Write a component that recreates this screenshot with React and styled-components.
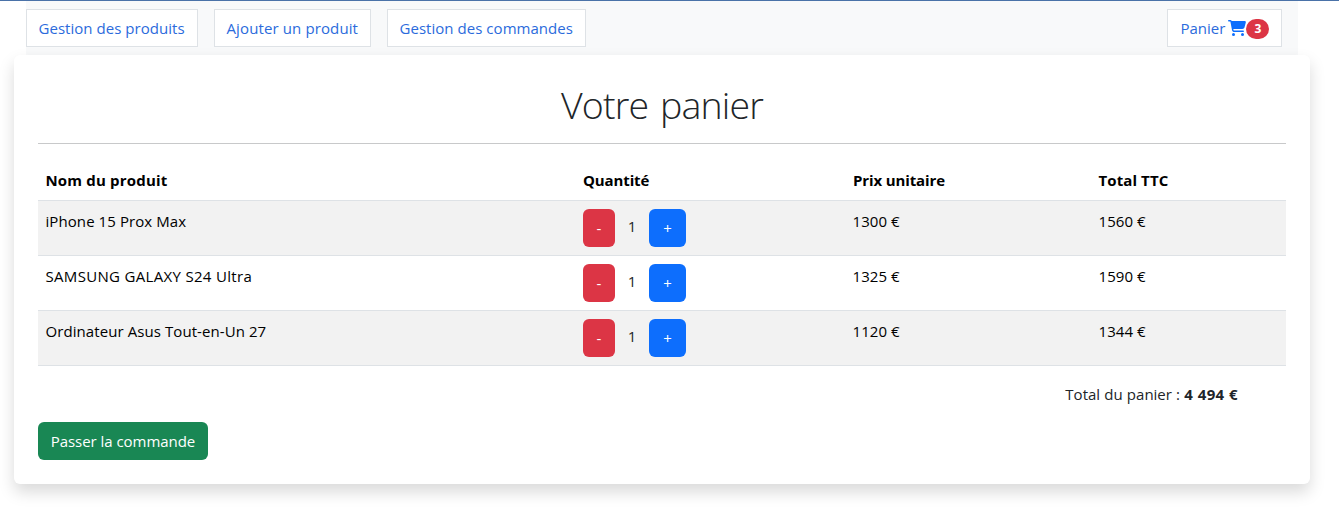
import React from "react";
import styled, { createGlobalStyle } from "styled-components";
import { FaCartShopping } from "react-icons/fa6";

const GlobalStyle = createGlobalStyle`
  *, *::before, *::after { box-sizing: border-box; }
  body {
    margin: 0;
    background: #fff;
    color: #212529;
    font-family: "Segoe UI", "Open Sans", "Noto Sans", sans-serif;
    font-size: 15px;
    line-height: 24px;
  }
`;

const Page = styled.div`
  height: 531px;
  overflow: hidden;
  border-top: 1px solid #4a72a8;
`;

const Navbar = styled.nav`
  display: flex;
  gap: 16px;
  height: 54px;
  margin: 0 41px 0 26px;
  padding: 8px 16px 8px 0;
  background: #f8f9fa;
`;

const NavLink = styled.a`
  display: flex;
  align-items: center;
  width: ${(p) => p.$width}px;
  height: 38px;
  padding: 0 0 0 ${(p) => (p.$end ? 12.5 : 11.5)}px;
  margin-left: ${(p) => (p.$end ? "auto" : 0)};
  border: 1px solid #dee2e6;
  background: #fff;
  color: #2b6bdc;
  letter-spacing: ${(p) => p.$track || 0}px;
  text-decoration: none;
  white-space: nowrap;
`;

const CartIcon = styled(FaCartShopping)`
  width: 18px;
  height: 16px;
  margin-left: 3px;
  color: #0d6efd;
`;

const Badge = styled.span`
  width: 23px;
  height: 20px;
  margin-top: 1px;
  border-radius: 10px;
  background: #dc3545;
  color: #fff;
  font-size: 12px;
  font-weight: 700;
  line-height: 20px;
  letter-spacing: 0;
  text-align: center;
`;

const Card = styled.main`
  height: 429px;
  margin: 0 29px 0 14px;
  padding: 24px;
  border-radius: 6px;
  background: #fff;
  box-shadow: 0 8px 16px rgba(0, 0, 0, 0.15);
`;

const Title = styled.h1`
  height: 48px;
  margin: 0 0 16px;
  padding-top: 2px;
  font-size: 37.5px;
  font-weight: 300;
  line-height: 48px;
  letter-spacing: -0.85px;
  word-spacing: 3px;
  text-align: center;
`;

const Rule = styled.hr`
  height: 1px;
  margin: 0 0 16px;
  border: 0;
  background: #c8c9ca;
`;

const Table = styled.table`
  width: 100%;
  table-layout: fixed;
  border-collapse: separate;
  border-spacing: 0;
  color: #000;
`;

const Col = styled.col`
  width: ${(p) => p.$width}px;
`;

const Th = styled.th`
  height: 41px;
  padding: 8px 8px 8px ${(p) => p.$inset || 7.5}px;
  border-bottom: 1px solid #dee2e6;
  font-weight: 700;
  letter-spacing: ${(p) => p.$track || 0}px;
  text-align: left;
`;

const Row = styled.tr`
  &:nth-child(odd) { background: #f2f2f2; }
`;

const Td = styled.td`
  height: 55px;
  padding: 8px 8px 8px 7.5px;
  border-bottom: 1px solid #dee2e6;
  letter-spacing: ${(p) => p.$track || 0}px;
  vertical-align: top;
`;

const Stepper = styled.div`
  display: flex;
  align-items: center;
  height: 38px;
  margin-left: 0.5px;
`;

const Button = styled.button`
  width: ${(p) => p.$width}px;
  height: 38px;
  padding: 0;
  border: 0;
  border-radius: 6px;
  background: ${(p) => p.$color};
  color: #fff;
  font: inherit;
  letter-spacing: ${(p) => p.$track || 0}px;
  text-align: center;
`;

const Quantity = styled.span`
  width: 34px;
  padding-bottom: 4px;
  color: #212529;
  text-align: center;
`;

const CartTotal = styled.p`
  margin: 16px 48px 16px 0;
  word-spacing: 0.3px;
  text-align: right;

  strong {
    font-weight: 700;
    letter-spacing: 0.35px;
  }
`;

const items = [
  { name: "iPhone 15 Prox Max", unit: "1300 €", total: "1560 €", track: 0.08 },
  { name: "SAMSUNG GALAXY S24 Ultra", unit: "1325 €", total: "1590 €", track: 0.32 },
  { name: "Ordinateur Asus Tout-en-Un 27", unit: "1120 €", total: "1344 €", track: 0.08 },
];

export default function App() {
  return (
    <>
      <GlobalStyle />
      <Page>
        <Navbar>
          <NavLink $width={172} $track={0.04}>Gestion des produits</NavLink>
          <NavLink $width={157} $track={0.12}>Ajouter un produit</NavLink>
          <NavLink $width={199} $track={0.04}>Gestion des commandes</NavLink>
          <NavLink $width={115} $end>
            Panier <CartIcon />
            <Badge>3</Badge>
          </NavLink>
        </Navbar>
        <Card>
          <Title>Votre panier</Title>
          <Rule />
          <Table>
            <colgroup>
              <Col $width={537} />
              <Col $width={270} />
              <Col $width={246} />
              <Col $width={195} />
            </colgroup>
            <thead>
              <tr>
                <Th $track={0.18}>Nom du produit</Th>
                <Th $track={-0.12} $inset={8}>Quantité</Th>
                <Th $track={-0.12} $inset={8}>Prix unitaire</Th>
                <Th $track={0.1}>Total TTC</Th>
              </tr>
            </thead>
            <tbody>
              {items.map((item) => (
                <Row key={item.name}>
                  <Td $track={item.track}>{item.name}</Td>
                  <Td>
                    <Stepper>
                      <Button $width={32} $color="#dc3545">-</Button>
                      <Quantity>1</Quantity>
                      <Button $width={37} $color="#0d6efd">+</Button>
                    </Stepper>
                  </Td>
                  <Td $track={0.08}>{item.unit}</Td>
                  <Td $track={0.08}>{item.total}</Td>
                </Row>
              ))}
            </tbody>
          </Table>
          <CartTotal>
            Total du panier : <strong>4 494 €</strong>
          </CartTotal>
          <Button $width={170} $color="#198754" $track={-0.04}>Passer la commande</Button>
        </Card>
      </Page>
    </>
  );
}
